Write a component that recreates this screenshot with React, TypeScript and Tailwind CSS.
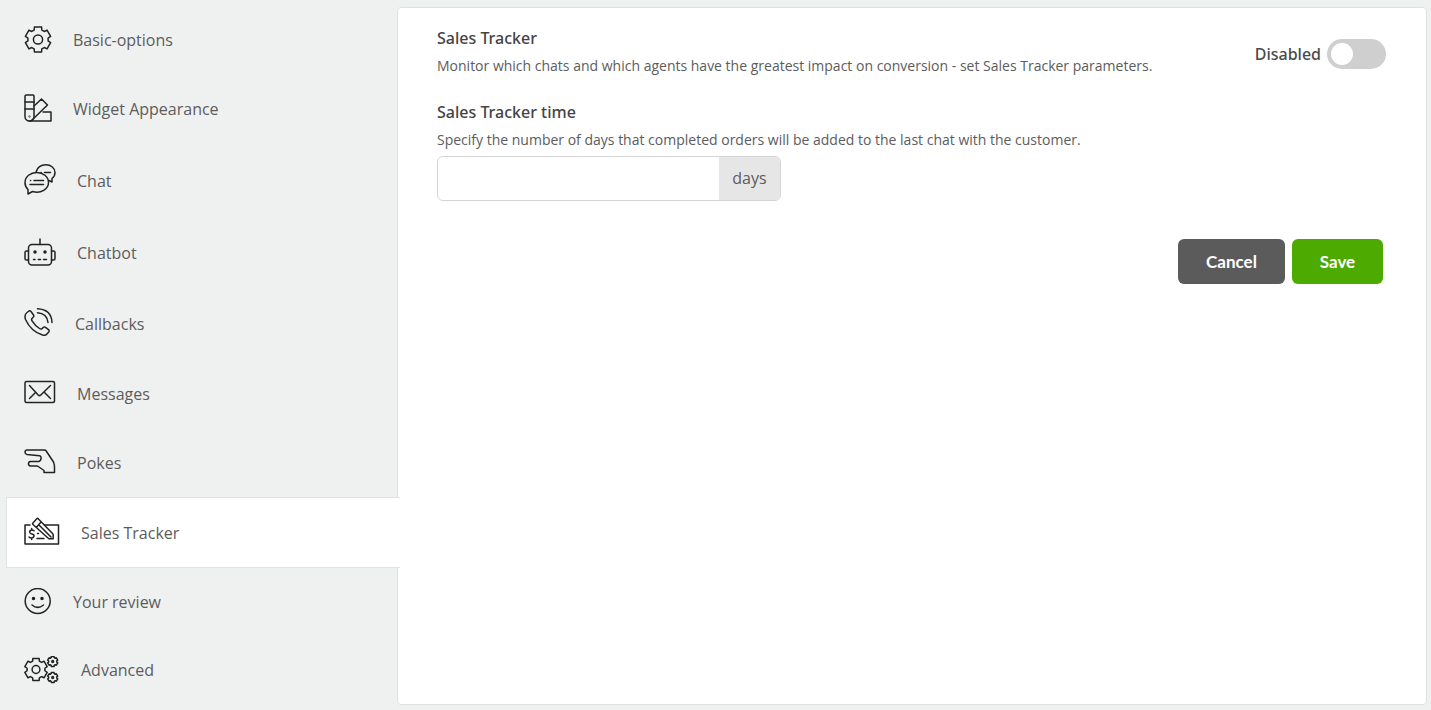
import type { ReactNode } from "react";

type IconProps = { width: number; height: number; children: ReactNode };

/** Line icon drawn 1:1 in its own pixel box. */
function LineIcon({ width, height, children }: IconProps) {
  return (
    <svg
      width={width}
      height={height}
      viewBox={`0 0 ${width} ${height}`}
      fill="none"
      stroke="#222"
      strokeWidth="1.5"
      strokeLinecap="round"
      strokeLinejoin="round"
      className="shrink-0"
      aria-hidden="true"
    >
      {children}
    </svg>
  );
}

/** Outline of a six-toothed cog. */
function cogPath(cx: number, cy: number, outer: number, inner: number) {
  const points: string[] = [];
  for (let i = 0; i < 6; i++) {
    const corners = [
      [inner, -22],
      [outer, -16],
      [outer, 16],
      [inner, 22],
    ];
    for (const [radius, offset] of corners) {
      const angle = ((i * 60 - 90 + offset) * Math.PI) / 180;
      points.push(`${(cx + radius * Math.cos(angle)).toFixed(2)} ${(cy + radius * Math.sin(angle)).toFixed(2)}`);
    }
  }
  return `M${points.join("L")}Z`;
}

const NAV_ITEMS = [
  {
    label: "Basic-options",
    icon: (
      <LineIcon width={28} height={28}>
        <path d={cogPath(14, 13.5, 13, 10.2)} />
        <circle cx="14" cy="13.5" r="4.6" />
      </LineIcon>
    ),
  },
  {
    label: "Widget Appearance",
    icon: (
      <LineIcon width={28} height={30}>
        <path d="M1 2.2Q1 1 2.2 1H9Q10 1 10 2.2V22.5A4.5 4.5 0 0 1 1 22.5Z" />
        <path d="M1 8H10M1 15H10M10 12L17.5 5L23.5 11L7.5 26.5M19 18H27V27H5.5" />
        <circle cx="5.5" cy="22.5" r="0.3" />
      </LineIcon>
    ),
  },
  {
    label: "Chat",
    icon: (
      <LineIcon width={32} height={34}>
        <path d="M4 25.5V30L8.5 27.5C17 30 24.5 25 24.5 18.5C24.5 12.5 19 8.5 12.8 8.5C6.5 8.5 1 12.5 1 18.5C1 21.5 2 23.7 4 25.5Z" />
        <path d="M12 8C13.5 3 17.5 0.8 21.8 0.8C27 0.8 31 4 31 8.5C31 11 30 13 28 14.3V18L25 16.5" />
        <path d="M10 16.5H19.5M6 20.5H19.5M20.5 8.5H26.5M6.5 16.5H6.7M17 8.5H17.2" />
      </LineIcon>
    ),
  },
  {
    label: "Chatbot",
    icon: (
      <LineIcon width={32} height={30}>
        <rect x="4.5" y="6.5" width="23" height="20.5" rx="3.5" />
        <path d="M16 1V6.5M4.5 13H2.5Q1 13 1 14.5V20.5Q1 22 2.5 22H4.5M27.5 13H29.5Q31 13 31 14.5V20.5Q31 22 29.5 22H27.5" />
        <path d="M9.5 21.5H11M14.3 21.5H16.5M19.5 21.5H22.5" />
        <circle cx="11" cy="14" r="1" fill="#222" />
        <circle cx="21" cy="14" r="1" fill="#222" />
      </LineIcon>
    ),
  },
  {
    label: "Callbacks",
    icon: (
      <LineIcon width={30} height={32}>
        <path d="M3 4.5L5 3Q6 2.4 7 3.5L9.5 7Q10.3 8.3 9 9.5L8 10.5Q7.2 11.5 8 12.8Q11 17.5 15.5 20.5Q17 21.5 18 20.7L19.2 19.5Q20.3 18.5 21.5 19.3L24.5 21.7Q25.7 22.7 24.7 24L23 26Q21.5 27.8 18.5 27Q7 23.5 1.5 11.5Q0 6.5 3 4.5Z" />
        <path d="M13.5 0.8Q27.5 1.5 28 14.5M13.5 4.8Q23 5.5 24 14.5" />
      </LineIcon>
    ),
  },
  {
    label: "Messages",
    icon: (
      <LineIcon width={32} height={28}>
        <rect x="1" y="1.5" width="29.5" height="21" rx="1.5" />
        <path d="M5.5 5.5L14.2 15Q15.5 16.3 16.8 15L26.5 5.5M5.5 18.5L11.5 12.5M26.5 18.5L20.5 12.5" />
      </LineIcon>
    ),
  },
  {
    label: "Pokes",
    icon: (
      <LineIcon width={32} height={29}>
        <path d="M3 2H20.5Q21.5 2 22.2 3L29.5 14Q30.5 16.5 30.5 19.5V24.5H20V22.5L13.5 18H6.5Q4.5 17.8 4.5 15.8Q4.5 13.5 6.5 13.5H15Q16.5 13.2 17 11Q17.500 8 15.500 7.800L3 6.500Q1 6.1 1 4Q1.2 2 3 2Z" />
      </LineIcon>
    ),
  },
  {
    label: "Sales Tracker",
    active: true,
    icon: (
      <LineIcon width={36} height={31}>
        <path d="M6 8H1V27H34.5V8H20.5" />
        <path d="M8.5 6.5L13 1.5Q13.5 1 14.2 1.7L28.5 16.5Q29.2 17.2 29.2 18V21.8H24.8L8.7 7.2M12.3 10.5L17 5M15.5 8.5L27 20" />
        <path d="M13 21.5H20M13.5 16.5H14.5" />
        <path d="M10 13.7Q8.7 12.8 7 13.2Q5.3 13.8 5.8 15.5Q6.3 16.6 8 17Q10.2 17.5 10 19.3Q9.5 21 7.5 21Q6 21 5 20M7.7 11.5V13M7.7 21V22.5" />
      </LineIcon>
    ),
  },
  {
    label: "Your review",
    icon: (
      <LineIcon width={28} height={28}>
        <circle cx="13.7" cy="13" r="12.5" />
        <circle cx="9.5" cy="10.5" r="1" fill="#222" />
        <circle cx="18" cy="10.5" r="1" fill="#222" />
        <path d="M8 17Q13.7 21.8 19.5 17" />
      </LineIcon>
    ),
  },
  {
    label: "Advanced",
    icon: (
      <LineIcon width={36} height={28}>
        <path d={cogPath(12, 13.5, 11.5, 9)} />
        <circle cx="12" cy="13.5" r="3.9" />
        <path d={cogPath(28.7, 5.5, 5.2, 4.1)} />
        <path d={cogPath(28.7, 21.5, 5.2, 4.1)} />
        <circle cx="28.7" cy="5.5" r="0.9" />
        <circle cx="28.7" cy="21.5" r="0.9" />
      </LineIcon>
    ),
  },
];

function SideNav() {
  return (
    <nav className="w-[391px] shrink-0 pt-1.5">
      {NAV_ITEMS.map((item) => (
        <a
          key={item.label}
          href="#"
          aria-current={item.active ? "page" : undefined}
          className={
            item.active
              ? "relative z-10 -mr-[3px] flex items-center gap-[21px] border-y border-l border-[#e2e3e3] bg-white py-[19px] pl-[17px]"
              : "flex items-center gap-[21px] py-5 pl-[18px]"
          }
        >
          {item.icon}
          <span className="text-base leading-6">{item.label}</span>
        </a>
      ))}
    </nav>
  );
}

function TrackerSwitch() {
  return (
    <label className="mt-[13px] flex shrink-0 items-center gap-1.5 font-['Noto_Sans',sans-serif] text-base font-medium leading-6 text-[#4a4a4a]">
      Disabled
      <input
        type="checkbox"
        role="switch"
        className="h-[30px] w-[59px] appearance-none rounded-full bg-[#cfcfcf] p-1 before:block before:size-[22px] before:rounded-full before:bg-white checked:bg-[#4caa00] checked:before:ml-auto"
      />
    </label>
  );
}

export default function App() {
  return (
    <div className="flex min-h-screen bg-[#eff1f1] pl-1.5 pr-1 font-['Open_Sans',sans-serif] text-[#5c5c5c]">
      <SideNav />
      <main className="mb-[5px] mt-[7px] flex-1 rounded border border-[#dfe0e0] bg-white pl-[39px] pr-10 pt-[18px]">
        <header className="flex items-start justify-between">
          <div>
            <h1 className="font-['Noto_Sans',sans-serif] text-base font-medium leading-6 text-[#444]">Sales Tracker</h1>
            <p className="mt-1.5 text-sm leading-5">
              Monitor which chats and which agents have the greatest impact on conversion - set Sales Tracker parameters.
            </p>
          </div>
          <TrackerSwitch />
        </header>

        <form onSubmit={(event) => event.preventDefault()}>
          <label
            htmlFor="tracker-days"
            className="mt-6 block font-['Noto_Sans',sans-serif] text-base font-medium leading-6 text-[#444]"
          >
            Sales Tracker time
          </label>
          <p id="tracker-days-hint" className="mt-1.5 text-sm leading-5">
            Specify the number of days that completed orders will be added to the last chat with the customer.
          </p>
          <div className="mt-1.5 flex h-[45px] w-[344px] overflow-hidden rounded-md border border-[#d5d5d5]">
            <input
              id="tracker-days"
              type="text"
              aria-describedby="tracker-days-hint"
              className="min-w-0 flex-1 px-3 text-base outline-none"
            />
            <span className="flex w-[61px] items-center justify-center bg-[#e6e6e6] pb-0.5 text-base leading-6">days</span>
          </div>
          <div className="mr-[3px] mt-[38px] flex justify-end gap-[7px] font-['Lato',sans-serif] text-[17px] font-bold leading-6 text-white">
            <button type="button" className="h-[45px] w-[107px] rounded-md bg-[#5b5b5b]">
              Cancel
            </button>
            <button type="submit" className="h-[45px] w-[91px] rounded-md bg-[#4caa00]">
              Save
            </button>
          </div>
        </form>
      </main>
    </div>
  );
}
